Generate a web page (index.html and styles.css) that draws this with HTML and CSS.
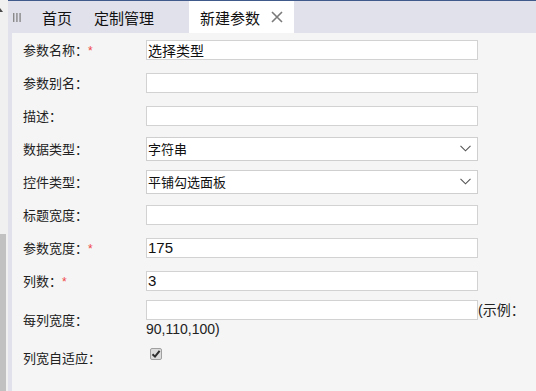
FILE: index.html
```html
<!doctype html>
<html>
<head>
    <meta charset="UTF-8">
    <title>新建参数</title>
    <link rel="stylesheet" href="styles.css">
</head>
<body>
    <div class="page">
        <div class="scroll-strip">
            <span class="scroll-arrow"></span>
            <span class="scroll-thumb"></span>
        </div>
        <div class="main">
            <div class="tabbar">
                <span class="tab-handle">
                    <svg width="8" height="9" viewBox="0 0 8 9"><rect x="0" y="0" width="1.4" height="9" fill="#8a8a8a"/><rect x="3.2" y="0" width="1.4" height="9" fill="#8a8a8a"/><rect x="6.4" y="0" width="1.4" height="9" fill="#8a8a8a"/></svg>
                </span>
                <span class="tab tab-first">首页</span>
                <span class="tab tab-second">定制管理</span>
                <span class="tab tab-active">新建参数
                    <svg class="tab-close" width="12" height="12" viewBox="0 0 12 12"><path d="M1 1 L11 11 M11 1 L1 11" stroke="#7a7a7a" stroke-width="1.6" fill="none"/></svg>
                </span>
            </div>
            <div class="panel">
                <div class="row">
                    <label class="row-label">参数名称：<em class="req">*</em></label>
                    <div class="row-value"><input class="text-input" type="text" value="选择类型"></div>
                </div>
                <div class="row">
                    <label class="row-label">参数别名：</label>
                    <div class="row-value"><input class="text-input" type="text" value=""></div>
                </div>
                <div class="row">
                    <label class="row-label">描述：</label>
                    <div class="row-value"><input class="text-input" type="text" value=""></div>
                </div>
                <div class="row">
                    <label class="row-label">数据类型：</label>
                    <div class="row-value">
                        <div class="select-box"><span>字符串</span>
                            <svg width="11" height="7" viewBox="0 0 11 7"><polyline points="0.5,0.8 5.5,5.8 10.5,0.8" stroke="#555" stroke-width="1.1" fill="none"/></svg>
                        </div>
                    </div>
                </div>
                <div class="row">
                    <label class="row-label">控件类型：</label>
                    <div class="row-value">
                        <div class="select-box"><span>平铺勾选面板</span>
                            <svg width="11" height="7" viewBox="0 0 11 7"><polyline points="0.5,0.8 5.5,5.8 10.5,0.8" stroke="#555" stroke-width="1.1" fill="none"/></svg>
                        </div>
                    </div>
                </div>
                <div class="row">
                    <label class="row-label">标题宽度：</label>
                    <div class="row-value"><input class="text-input" type="text" value=""></div>
                </div>
                <div class="row">
                    <label class="row-label">参数宽度：<em class="req">*</em></label>
                    <div class="row-value"><input class="text-input num-input" type="text" value="175"></div>
                </div>
                <div class="row">
                    <label class="row-label">列数：<em class="req">*</em></label>
                    <div class="row-value"><input class="text-input num-input" type="text" value="3"></div>
                </div>
                <div class="row row-tall">
                    <label class="row-label">每列宽度：</label>
                    <div class="row-value row-value-text"><input class="text-input" type="text" value="">(示例：90,110,100)</div>
                </div>
                <div class="row row-check">
                    <label class="row-label">列宽自适应：</label>
                    <div class="row-value">
                        <span class="check-box">
                            <svg width="10" height="10" viewBox="0 0 10 10"><path d="M1.5 5.2 L4 7.6 L8.6 1.8" stroke="#2e2e2e" stroke-width="2" fill="none"/></svg>
                        </span>
                    </div>
                </div>
            </div>
        </div>
    </div>
</body>
</html>
```

FILE: styles.css
```css
body {
    margin: 0;
    font-family: "Liberation Sans", "Noto Sans CJK SC", sans-serif;
    color: #222;
}
.page {
    display: flex;
    width: 536px;
    height: 391px;
    overflow: hidden;
}

/* 左侧滚动条 */
.scroll-strip {
    width: 8px;
    display: flex;
    flex-direction: column;
    background-color: #f0f0f0;
    overflow: hidden;
}
.scroll-arrow {
    width: 0;
    height: 0;
    margin: 8px 0 0 -3px;
    border-left: 3.5px solid transparent;
    border-right: 3.5px solid transparent;
    border-bottom: 4px solid #4a4a4a;
}
.scroll-thumb {
    width: 6px;
    height: 157px;
    margin-top: auto;
    background-color: #c1c1c1;
}

/* 主体区域 */
.main {
    flex: 1;
    display: flex;
    flex-direction: column;
    border-top: 1px solid #3f5a8b;
    background-color: #e1e1eb;
}
.tabbar {
    height: 32px;
    display: flex;
    align-items: stretch;
    font-size: 15px;
}
.tab-handle {
    width: 23px;
    display: flex;
    align-items: center;
    padding-left: 5px;
    box-sizing: border-box;
}
.tab {
    display: flex;
    align-items: center;
    color: #111;
}
.tab-first {
    margin-left: 11px;
}
.tab-second {
    margin-left: 22px;
}
.tab-active {
    margin-left: 35px;
    padding: 0 11px;
    background-color: #fff;
}
.tab-close {
    margin-left: 11px;
}

.panel {
    flex: 1;
    margin-left: 4px;
    background-color: #f5f5f5;
}
.row {
    display: flex;
    align-items: center;
    height: 33px;
}
.row-label {
    width: 134px;
    padding-left: 11px;
    box-sizing: border-box;
    font-size: 13px;
    color: #222;
}
.req {
    font-style: normal;
    color: #f04848;
    font-size: 12px;
}
.row-value {
    width: 380px;
    font-size: 14px;
}
.text-input {
    width: 332px;
    height: 20px;
    box-sizing: border-box;
    margin: 0;
    padding: 0 1px;
    border: 1px solid #d2d2d2;
    background-color: #fff;
    font-family: "Liberation Sans", "Noto Sans CJK SC", sans-serif;
    font-size: 14px;
    color: #111;
    outline: none;
}
/* 数字在原图里略大一些 */
.num-input {
    font-size: 15px;
}
.select-box {
    width: 332px;
    height: 24px;
    box-sizing: border-box;
    display: flex;
    align-items: center;
    justify-content: space-between;
    padding: 0 6px 0 1px;
    border: 1px solid #cfcfcf;
    background-color: #fff;
    font-size: 13px;
    color: #111;
}
.row-tall {
    height: 44px;
}
.row-value-text {
    line-height: 18px;
    color: #222;
}
.row-check {
    height: 32px;
}
.check-box {
    display: flex;
    align-items: center;
    justify-content: center;
    width: 12px;
    height: 12px;
    box-sizing: border-box;
    margin: -6px 0 0 4px;
    border: 1px solid #a0a0a0;
    border-radius: 2px;
    background-color: #dcdcdc;
}
```
